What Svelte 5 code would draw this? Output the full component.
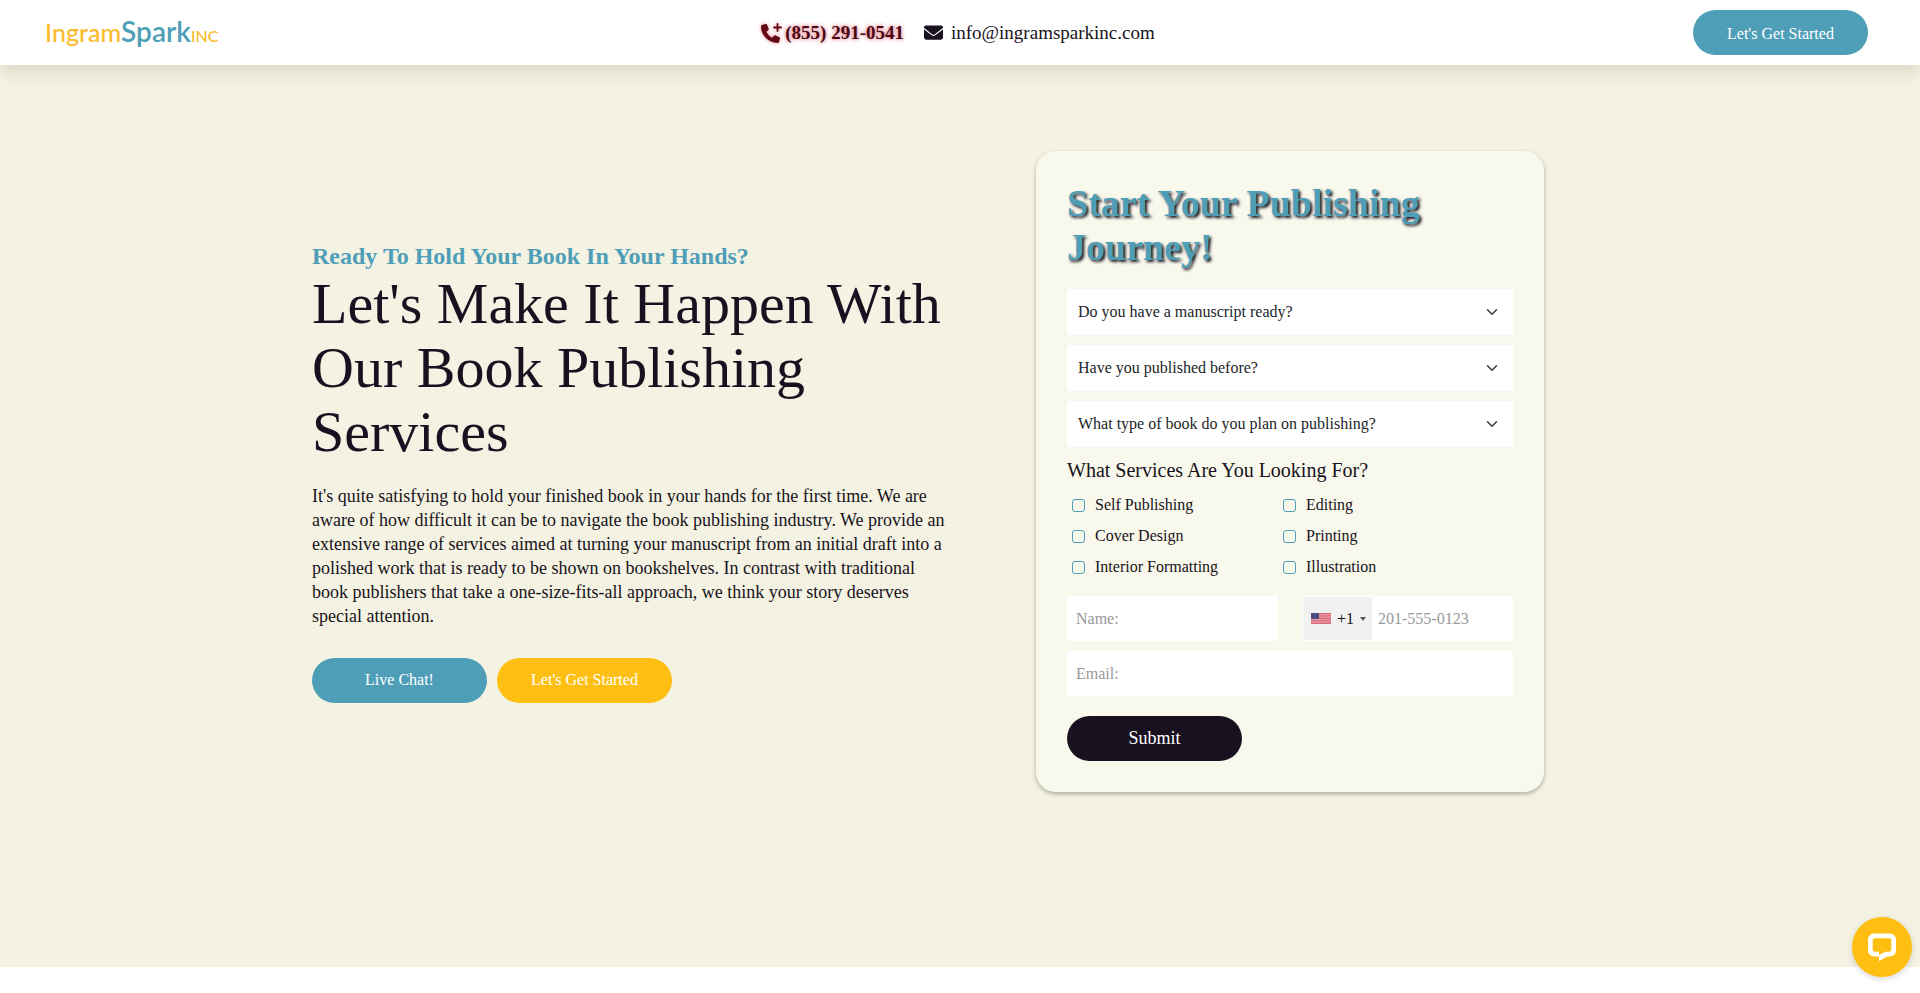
<script>
  const questions = [
    { id: 'manuscript', text: 'Do you have a manuscript ready?', options: ['Yes', 'No'] },
    { id: 'published', text: 'Have you published before?', options: ['Yes', 'No'] },
    { id: 'booktype', text: 'What type of book do you plan on publishing?', options: ['Fiction', 'Non-Fiction'] },
  ];
  const services = [
    'Self Publishing', 'Editing',
    'Cover Design', 'Printing',
    'Interior Formatting', 'Illustration',
  ];
</script>

<header class="topbar">
  <a class="logo" href="#home" aria-label="IngramSpark Inc">
    <span class="ingram">Ingram</span><span class="spark">Spark</span><span class="inc">INC</span>
  </a>
  <div class="contacts">
    <a class="phone" href="tel:8552910541">
      <svg viewBox="0 0 21 20" width="21" height="20" aria-hidden="true">
        <path transform="translate(0 1) scale(.0371)" d="M164.9 24.6c-7.7-18.6-28-28.5-47.4-23.2l-88 24C12.1 30.2 0 46 0 64C0 311.4 200.6 512 448 512c18 0 33.8-12.1 38.6-29.5l24-88c5.3-19.4-4.6-39.7-23.2-47.4l-96-40c-16.3-6.8-35.2-2.1-46.3 11.6L304.7 368C234.3 334.7 177.3 277.7 144 207.3L193.3 167c13.7-11.2 18.4-30 11.6-46.3l-40-96z" />
        <path d="M16.500 1v7M13 4.500h7" stroke="currentColor" stroke-width="1.800" stroke-linecap="round" />
      </svg>
      <span>(855) 291-0541</span>
    </a>
    <a class="email" href="mailto:info@ingramsparkinc.com">
      <svg viewBox="0 0 512 512" width="19" height="19" aria-hidden="true">
        <path d="M48 64C21.500 64 0 85.500 0 112c0 15.100 7.100 29.300 19.200 38.400L236.800 313.600c11.400 8.500 27 8.500 38.400 0L492.800 150.400c12.100-9.100 19.200-23.300 19.200-38.400c0-26.500-21.500-48-48-48L48 64zM0 176L0 384c0 35.300 28.700 64 64 64l384 0c35.300 0 64-28.700 64-64l0-208L294.400 339.200c-22.800 17.100-54 17.100-76.800 0L0 176z" />
      </svg>
      <span>info@ingramsparkinc.com</span>
    </a>
  </div>
  <button class="btn teal" type="button">Let's Get Started</button>
</header>

<main class="hero">
  <div class="container">
    <section class="intro">
      <p class="kicker">Ready To Hold Your Book In Your Hands?</p>
      <h1>Let's Make It Happen With Our Book Publishing Services</h1>
      <p class="copy">It's quite satisfying to hold your finished book in your hands for the first time. We are aware of how difficult it can be to navigate the book publishing industry. We provide an extensive range of services aimed at turning your manuscript from an initial draft into a polished work that is ready to be shown on bookshelves. In contrast with traditional book publishers that take a one-size-fits-all approach, we think your story deserves special attention.</p>
      <div class="actions">
        <button class="btn teal" type="button">Live Chat!</button>
        <button class="btn yellow" type="button">Let's Get Started</button>
      </div>
    </section>

    <form class="card" onsubmit={(e) => e.preventDefault()}>
      <h2>Start Your Publishing Journey!</h2>
      <div class="stack">
        {#each questions as q (q.id)}
          <select name={q.id} aria-label={q.text}>
            <option value="">{q.text}</option>
            {#each q.options as o}<option>{o}</option>{/each}
          </select>
        {/each}
      </div>
      <fieldset>
        <legend>What Services Are You Looking For?</legend>
        <div class="services">
          {#each services as s}
            <label><input type="checkbox" name="services" value={s} /><span>{s}</span></label>
          {/each}
        </div>
      </fieldset>
      <div class="stack">
        <div class="pair">
          <input class="field" type="text" placeholder="Name:" aria-label="Name" />
          <div class="tel">
            <button class="country" type="button" aria-label="Country code +1">
              <svg viewBox="0 0 20 11" width="20" height="11" aria-hidden="true">
                <rect width="20" height="11" fill="#efb4bb" />
                <path d="M0 .5h20M0 2.200h20M0 3.900h20M0 5.600h20M0 7.300h20M0 9h20M0 10.600h20" stroke="#d2596b" stroke-width=".9" />
                <rect width="8" height="6" fill="#4b4f80" />
              </svg>
              <span>+1</span>
              <span class="caret"></span>
            </button>
            <input class="field" type="tel" placeholder="201-555-0123" aria-label="Phone" />
          </div>
        </div>
        <input class="field" type="email" placeholder="Email:" aria-label="Email" />
      </div>
      <button class="btn dark" type="submit">Submit</button>
    </form>
  </div>
</main>

<button class="chat" type="button" aria-label="Open chat">
  <svg viewBox="0 0 28 28" width="28" height="28" aria-hidden="true">
    <path fill="#fff" fill-rule="evenodd" d="M6 0.500h16a6 6 0 0 1 6 6v11a6 6 0 0 1-6 6h-2.500L11 28v-4.500H6a6 6 0 0 1-6-6v-11a6 6 0 0 1 6-6zM7 5.200a2.300 2.300 0 0 0-2.300 2.300v9a2.300 2.300 0 0 0 2.300 2.300h4v3.200l6.500-3.200H21a2.300 2.300 0 0 0 2.300-2.300v-9A2.300 2.300 0 0 0 21 5.200z" />
  </svg>
</button>

<style>
  :global(body) {
    background: #fff;
    color: #181220;
    font-family: 'Liberation Serif', 'Times New Roman', serif;
    font-size: 16px;
  }
  :global(*) { box-sizing: border-box; }
  button, input, select { font: inherit; border: 0; margin: 0; }
  h1, h2, p { margin: 0; }
  a { color: inherit; text-decoration: none; }

  .topbar {
    position: relative;
    z-index: 2;
    display: flex;
    align-items: center;
    justify-content: space-between;
    padding: 10px 52px 10px 45px;
    background: #fff;
    box-shadow: 0 8px 16px rgba(0, 0, 0, 0.1);
  }
  .topbar .btn { padding-top: 2px; }
  .logo {
    display: flex;
    align-items: baseline;
    min-width: 178px;
    padding-top: 2px;
    font-family: Lato, sans-serif;
    font-size: 25px;
    font-weight: 500;
    line-height: 36px;
    color: #fbbc2c;
  }
  .spark { font-size: 28px; font-weight: 600; color: #4f9eb8; }
  .inc { font-size: 16px; }
  .contacts { display: flex; align-items: center; gap: 20px; font-size: 19px; }
  .phone, .email { display: flex; align-items: center; }
  .phone {
    gap: 3px;
    font-weight: 700;
    color: #4a0611;
    text-shadow: 0 0 4px #d8485a;
  }
  .phone svg { color: #650713; fill: currentColor; filter: drop-shadow(0 0 2px rgba(224, 72, 92, 0.6)); }
  .email { gap: 8px; }
  .email svg { fill: #181220; }

  .btn {
    width: 175px;
    height: 45px;
    padding: 0;
    border-radius: 25px;
    color: #fff;
    cursor: pointer;
  }
  .teal { background: #4f9eb8; }
  .yellow { background: #ffbf12; }
  .dark { background: #181220; font-size: 18px; margin-top: 20px; display: block; }

  .hero { background: #f4f2e2; padding: 86px 0 175px; }
  .container {
    display: grid;
    grid-template-columns: 636px 508px;
    column-gap: 88px;
    align-items: center;
    max-width: 1320px;
    margin: 0 auto;
    padding: 0 12px;
  }
  .kicker { margin-bottom: 1px; font-size: 24px; line-height: 30px; font-weight: 700; color: #4f9eb8; }
  h1 { font-size: 58px; line-height: 64px; font-weight: 400; }
  .copy { margin-top: 20px; font-size: 18px; line-height: 24px; }
  .actions { display: flex; gap: 10px; margin-top: 30px; }
  .actions .btn { padding-bottom: 1px; }

  .card {
    padding: 30px 31px 31px;
    border-radius: 20px;
    background: #f8f8ec;
    box-shadow: 0 2px 4px rgba(60, 70, 60, 0.4);
  }
  h2 {
    margin-bottom: 20px;
    font-size: 38px;
    line-height: 44px;
    font-weight: 700;
    color: #4f9eb8;
    text-shadow: 2px 2px 3px #181220;
  }
  .stack { display: grid; gap: 10px; }
  select {
    width: 100%;
    height: 46px;
    padding: 0 40px 0 11px;
    appearance: none;
    border-radius: 2px;
    line-height: 24px;
    color: #212529;
    background: #fff url("data:image/svg+xml,%3Csvg xmlns='http://www.w3.org/2000/svg' viewBox='0 0 16 16'%3E%3Cpath fill='none' stroke='%23343a40' stroke-linecap='round' stroke-linejoin='round' stroke-width='2' d='m2 5 6 6 6-6'/%3E%3C/svg%3E") no-repeat right 15px center / 12px 12px;
  }
  fieldset { margin: 11px 0 17px; padding: 0; border: 0; min-width: 0; }
  legend { padding: 0; font-size: 20px; line-height: 24px; }
  .services {
    display: grid;
    grid-template-columns: 211px 211px;
    row-gap: 7px;
    margin-top: 11px;
    padding-left: 5px;
  }
  .services label { display: flex; align-items: center; gap: 10px; line-height: 24px; }
  .services input {
    width: 13px;
    height: 13px;
    appearance: none;
    border: 1px solid #4f9eb8;
    border-radius: 3px;
  }
  .services input:checked { background: #4f9eb8; }
  .pair { display: grid; grid-template-columns: 1fr 1fr; gap: 24px; }
  .field {
    width: 100%;
    min-width: 0;
    height: 45px;
    padding: 0 9px;
    border-radius: 2px;
    background: #fff;
  }
  .field::placeholder { color: #999; opacity: 1; }
  .tel { display: flex; background: #fff; padding-left: 1px; }
  .tel .field { padding: 0 6px; }
  .country {
    display: flex;
    flex: none;
    align-items: center;
    width: 69px;
    height: 43px;
    margin: 1px 0;
    padding: 0 0 0 8px;
    gap: 6px;
    background: #f1f1f1;
    color: #181220;
  }
  .caret {
    border: 3px solid transparent;
    border-top: 4px solid #555;
    border-bottom: 0;
  }

  .chat {
    position: fixed;
    right: 8px;
    bottom: 16px;
    z-index: 3;
    display: grid;
    place-items: center;
    width: 60px;
    height: 60px;
    padding: 0;
    border-radius: 50%;
    background: #ffbf12;
    box-shadow: 0 2px 6px rgba(0, 0, 0, 0.15);
  }
</style>
